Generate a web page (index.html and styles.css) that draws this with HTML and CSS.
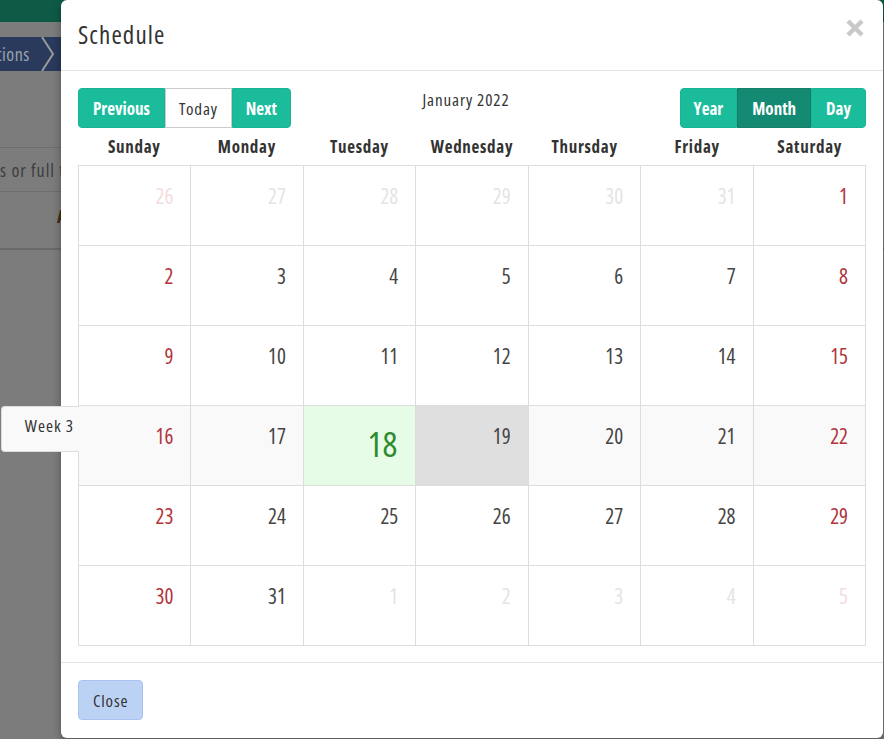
FILE: index.html
```html
<!DOCTYPE html>
<html>
<head>
<meta charset="utf-8">
<link rel="stylesheet" href="styles.css">
</head>
<body>
<div class="page">
  <div class="backdrop">
    <div class="topbar"></div>
    <div class="crumbs">
      <span class="crumb-text">tions</span>
      <svg class="chev" width="14" height="34" viewBox="0 0 14 34"><path d="M1 0 L12 17 L1 34" fill="none" stroke="#9a9a9a" stroke-width="2"/></svg>
    </div>
    <div class="bg-gap"></div>
    <div class="bg-search"><span>s or full t</span></div>
    <div class="bg-row"><span class="bg-a">A</span></div>
  </div>

  <div class="modal">
    <div class="modal-header">
      <h4 class="modal-title">Schedule</h4>
      <svg class="close-x" width="18" height="18" viewBox="0 0 18 18"><path d="M2 2 L16 16 M16 2 L2 16" stroke="#c9c9c9" stroke-width="4.5"/></svg>
    </div>
    <div class="modal-body">
      <div class="toolbar">
        <div class="btn-group">
          <button class="btn btn-teal">Previous</button>
          <button class="btn btn-white">Today</button>
          <button class="btn btn-teal narrow">Next</button>
        </div>
        <div class="cal-title">January 2022</div>
        <div class="btn-group right">
          <button class="btn btn-teal narrow">Year</button>
          <button class="btn btn-teal active">Month</button>
          <button class="btn btn-teal">Day</button>
        </div>
      </div>
      <div class="dow">
        <div>Sunday</div><div>Monday</div><div>Tuesday</div><div>Wednesday</div><div>Thursday</div><div>Friday</div><div>Saturday</div>
      </div>
      <div class="grid">
        <div class="week">
          <div class="cell muted-we">26</div><div class="cell muted">27</div><div class="cell muted">28</div><div class="cell muted">29</div><div class="cell muted">30</div><div class="cell muted">31</div><div class="cell we">1</div>
        </div>
        <div class="week">
          <div class="cell we">2</div><div class="cell">3</div><div class="cell">4</div><div class="cell">5</div><div class="cell">6</div><div class="cell">7</div><div class="cell we">8</div>
        </div>
        <div class="week">
          <div class="cell we">9</div><div class="cell">10</div><div class="cell">11</div><div class="cell">12</div><div class="cell">13</div><div class="cell">14</div><div class="cell we">15</div>
        </div>
        <div class="week current">
          <div class="week-tab">Week 3</div>
          <div class="cell we">16</div><div class="cell">17</div><div class="cell today">18</div><div class="cell selected">19</div><div class="cell">20</div><div class="cell">21</div><div class="cell we">22</div>
        </div>
        <div class="week">
          <div class="cell we">23</div><div class="cell">24</div><div class="cell">25</div><div class="cell">26</div><div class="cell">27</div><div class="cell">28</div><div class="cell we">29</div>
        </div>
        <div class="week">
          <div class="cell we">30</div><div class="cell">31</div><div class="cell muted">1</div><div class="cell muted">2</div><div class="cell muted">3</div><div class="cell muted">4</div><div class="cell muted-we">5</div>
        </div>
      </div>
    </div>
    <div class="modal-footer">
      <button class="btn btn-close">Close</button>
    </div>
  </div>
</div>
</body>
</html>
```
FILE: styles.css
```css
* { box-sizing: border-box; }
html, body { margin: 0; padding: 0; }
body {
  width: 884px;
  height: 739px;
  overflow: hidden;
  background: #7c7c7c;
  font-family: "Open Sans", "DejaVu Sans Condensed", sans-serif;
  font-stretch: 75%;
  color: #333;
}
.page { position: relative; width: 884px; height: 739px; }

/* backdrop (dimmed page behind the modal) */
.backdrop { width: 884px; }
.topbar { height: 22px; background: #0e5a47; }
.crumbs {
  margin-top: 15px;
  height: 34px;
  width: 70px;
  background: #2a3a5c;
  display: flex;
  align-items: center;
  position: relative;
}
.crumb-text { color: #9aa2b0; font-size: 18px; margin-left: -3px; letter-spacing: 0.5px; }
.chev { margin-left: 11px; }
.bg-gap { height: 77px; border-bottom: 1px solid #6d6d6d; }
.bg-search {
  height: 44px;
  border-bottom: 1px solid #6d6d6d;
  display: flex;
  align-items: center;
  font-size: 18px;
  letter-spacing: 1px;
  color: #3d3d3d;
}
.bg-row {
  height: 58px;
  border-bottom: 2px solid #6a6a6a;
  position: relative;
}
.bg-a { position: absolute; left: 57px; top: 12px; font-size: 18px; color: #3a2e10; font-weight: bold; }

/* modal */
.modal {
  position: absolute;
  left: 61px;
  top: 0;
  width: 822px;
  height: 738px;
  background: #fff;
  border-radius: 6px;
  box-shadow: 0 3px 9px rgba(0,0,0,0.35);
  display: flex;
  flex-direction: column;
}
.modal-header {
  height: 71px;
  border-bottom: 1px solid #e5e5e5;
  display: flex;
  align-items: center;
  justify-content: space-between;
  padding: 0 19px 2px 17px;
}
.modal-title {
  margin: 0;
  font-size: 25px;
  font-weight: normal;
  letter-spacing: 1.1px;
  color: #333;
}
.close-x { margin-top: -12px; }

.modal-body { padding: 17px 17px 0 17px; flex: 1; }
.toolbar {
  display: grid;
  grid-template-columns: 1fr auto 1fr;
  align-items: start;
  height: 40px;
}
.btn-group { display: flex; }
.btn-group.right { justify-content: flex-end; }
.btn {
  font-family: inherit;
  font-stretch: 75%;
  font-size: 17px;
  height: 40px;
  border: 1px solid transparent;
  margin: 0;
  cursor: pointer;
}
.btn-teal {
  background: #1abc9c;
  color: #fff;
  font-weight: bold;
  border-color: #18b495;
  padding: 0 14px;
}
.btn-teal.narrow { padding: 0 13px; }
.btn-teal.active { background: #148a72; border-color: #12806a; }
.btn-white {
  background: #fff;
  color: #333;
  border-color: #ccc;
  padding: 0 13px;
  letter-spacing: 0.8px;
}
.btn-group .btn:first-child { border-radius: 4px 0 0 4px; }
.btn-group .btn:last-child { border-radius: 0 4px 4px 0; }
.cal-title {
  font-size: 17px;
  letter-spacing: 0.9px;
  color: #333;
  padding-top: 0;
  margin-left: -12px;
}

.dow {
  display: grid;
  grid-template-columns: repeat(7, 1fr);
  height: 37px;
  align-items: center;
  text-align: center;
  font-weight: bold;
  font-size: 17px;
  letter-spacing: 0.7px;
  color: #333;
  padding-bottom: 1px;
}

.grid {
  border-top: 1px solid #ddd;
  border-left: 1px solid #ddd;
}
.week {
  display: grid;
  grid-template-columns: repeat(7, 1fr);
  position: relative;
}
.week.current { background: #f9f9f9; }
.cell {
  height: 80px;
  border-right: 1px solid #ddd;
  border-bottom: 1px solid #ddd;
  text-align: right;
  padding: 16px 17px 0 0;
  font-size: 21px;
  color: #444;
}
.cell.we { color: #b0343a; }
.cell.muted { color: #e4e4e4; }
.cell.muted-we { color: #f3dcdc; }
.cell.today {
  background: #e7fce7;
  color: #2f8a2f;
  font-size: 35px;
  padding-top: 14px;
  padding-right: 18px;
}
.cell.selected { background: #dfdfdf; }
.week-tab {
  position: absolute;
  right: 100%;
  top: 0;
  width: 78px;
  height: 46px;
  background: #f9f9f9;
  border: 1px solid #ddd;
  border-right: none;
  border-radius: 4px 0 0 4px;
  font-size: 17px;
  letter-spacing: 1px;
  color: #333;
  text-align: right;
  padding: 7px 5px 0 0;
}

.modal-footer {
  border-top: 1px solid #e5e5e5;
  height: 76px;
  padding: 17px 17px;
}
.btn-close {
  background: #bcd2f5;
  border: 1px solid #a9c3ee;
  border-radius: 4px;
  color: #333;
  padding: 0 14px;
  letter-spacing: 0.8px;
}
```
